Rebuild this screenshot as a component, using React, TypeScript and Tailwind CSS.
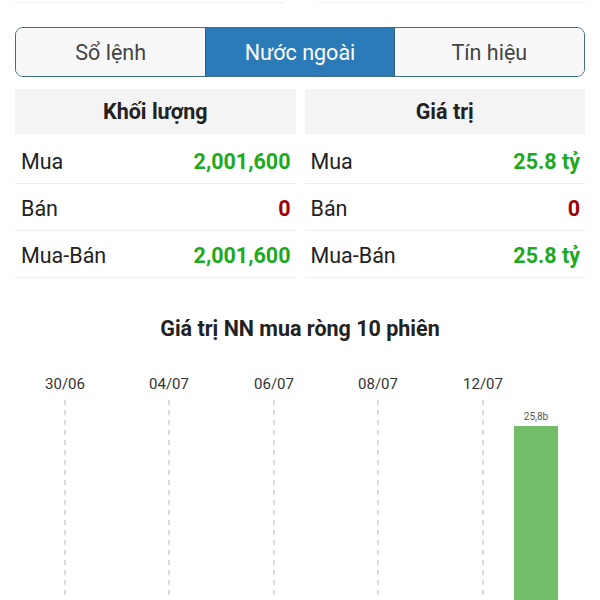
import React from "react";

const font = { fontFamily: "Roboto, 'Noto Sans', sans-serif" };

function Table({ title, rows }: { title: string; rows: { label: string; value: string; color: string }[] }) {
  return (
    <div className="flex-1 flex flex-col">
      <div className="h-[45px] bg-[#f4f4f4] flex items-center justify-center text-[21.5px] leading-[28px] font-bold text-[#222]">
        {title}
      </div>
      <div className="mt-[3px] flex flex-col">
        {rows.map((r) => (
          <div key={r.label} className="h-[47px] pt-[3px] border-b border-[#ececec] flex items-center justify-between pl-[6px] pr-[5px]">
            <span className="text-[21.5px] leading-[28px] text-[#222]">{r.label}</span>
            <span className={`text-[21.5px] leading-[28px] font-bold ${r.color}`}>{r.value}</span>
          </div>
        ))}
      </div>
    </div>
  );
}

export default function App() {
  const green = "text-[#1ea91e]";
  const red = "text-[#a10000]";
  const dates = [
    { t: "30/06", x: 65 },
    { t: "04/07", x: 169 },
    { t: "06/07", x: 274 },
    { t: "08/07", x: 378 },
    { t: "12/07", x: 483 },
  ];
  return (
    <div className="w-[600px] h-[600px] bg-white overflow-hidden" style={font}>
      <div className="flex h-[3px] pl-[15px] pr-[15px] gap-[34px]">
        <div className="w-[269px] border-b border-[#efefef]" />
        <div className="flex-1 border-b border-[#efefef]" />
      </div>
      <div className="mx-[15px] mt-[24px] h-[50px] grid grid-cols-3 border-[1.5px] border-[#3f6f80] rounded-[8px] overflow-hidden">
        <div className="bg-[#f8f8f8] flex items-center justify-center pt-[2px] text-[21.5px] leading-[28px] text-[#444]">Sổ lệnh</div>
        <div className="bg-[#2a7bb8] flex items-center justify-center pt-[2px] text-[21.5px] leading-[28px] text-white border-x border-[#2c5d78]">Nước ngoài</div>
        <div className="bg-[#f8f8f8] flex items-center justify-center pt-[2px] text-[21.5px] leading-[28px] text-[#444]">Tín hiệu</div>
      </div>
      <div className="mx-[15px] mt-[12px] flex gap-[9px]">
        <Table
          title="Khối lượng"
          rows={[
            { label: "Mua", value: "2,001,600", color: green },
            { label: "Bán", value: "0", color: red },
            { label: "Mua-Bán", value: "2,001,600", color: green },
          ]}
        />
        <Table
          title="Giá trị"
          rows={[
            { label: "Mua", value: "25.8 tỷ", color: green },
            { label: "Bán", value: "0", color: red },
            { label: "Mua-Bán", value: "25.8 tỷ", color: green },
          ]}
        />
      </div>
      <div className="mt-[37px] text-center text-[21.5px] leading-[28px] font-bold text-[#222]">Giá trị NN mua ròng 10 phiên</div>
      <svg width="600" height="260" className="block mt-[17px]">
        {dates.map((d) => (
          <g key={d.t}>
            <text x={d.x} y={29} textAnchor="middle" fontSize="15" fill="#333" fontFamily="Roboto, sans-serif">
              {d.t}
            </text>
            <line x1={d.x} y1={40} x2={d.x} y2={260} stroke="#b8b8b8" strokeWidth="1" strokeDasharray="5 5" />
          </g>
        ))}
        <rect x="514" y="66" width="44" height="200" fill="#71bd68" />
        <text x="536" y="60" textAnchor="middle" fontSize="10" fill="#555" fontFamily="Roboto, sans-serif">
          25,8b
        </text>
      </svg>
    </div>
  );
}
